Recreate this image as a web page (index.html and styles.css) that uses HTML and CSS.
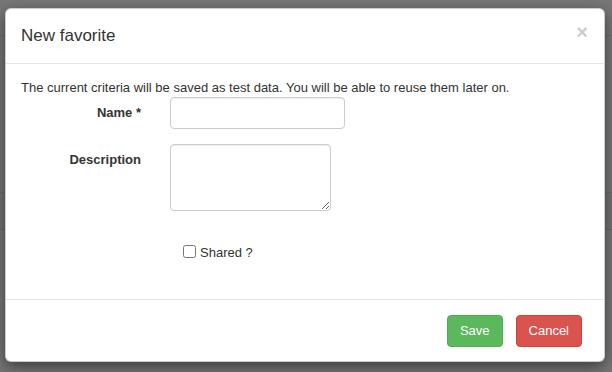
FILE: index.html
```html
<!DOCTYPE html>
<html lang="en">
<head>
    <meta charset="UTF-8">
    <meta name="viewport" content="width=device-width, initial-scale=1.0">
    <title>New favorite</title>
    <link rel="stylesheet" href="styles.css">
</head>
<body>
    <div class="modal-content">
        <div class="modal-header">
            <h4 class="modal-title">New favorite</h4>
            <button type="button" class="close">&times;</button>
        </div>

        <div class="modal-body">
            <p class="intro">The current criteria will be saved as test data. You will be able to reuse them later on.</p>

            <form class="form-horizontal">
                <div class="form-group">
                    <label class="control-label" for="favName">Name *</label>
                    <input type="text" id="favName" class="form-control">
                </div>
                <div class="form-group">
                    <label class="control-label" for="favDesc">Description</label>
                    <textarea id="favDesc" class="form-control desc"></textarea>
                </div>
                <div class="form-group checkbox-group">
                    <span></span>
                    <label class="checkbox">
                        <input type="checkbox"> Shared ?
                    </label>
                </div>
            </form>
        </div>

        <div class="modal-footer">
            <button type="button" class="btn btn-success">Save</button>
            <button type="button" class="btn btn-danger">Cancel</button>
        </div>
    </div>
</body>
</html>
```

FILE: styles.css
```css
* {
    box-sizing: border-box;
}

body {
    margin: 0;
    min-height: 372px;
    padding: 8px 7px 0 5px;
    font-family: "Liberation Sans", Arial, sans-serif;
    font-size: 13px;
    line-height: 20px;
    color: #333;
    background:
        linear-gradient(to bottom,
            transparent 35px, #6d6d6d 35px, #6d6d6d 36px, transparent 36px,
            transparent 192px, #6c6c6c 192px, #6c6c6c 193px, #737373 193px,
            #737373 229px, #696969 229px, #696969 230px, transparent 230px),
        #777;
}

.modal-content {
    width: 600px;
    height: 354px;
    background: #fff;
    border: 1px solid rgba(0, 0, 0, 0.2);
    border-radius: 6px;
    box-shadow: 0 5px 15px rgba(0, 0, 0, 0.5);
    display: flex;
    flex-direction: column;
}

.modal-header {
    display: flex;
    justify-content: space-between;
    align-items: flex-start;
    padding: 15px 16px 15px 15px;
    border-bottom: 1px solid #e5e5e5;
}

.modal-title {
    margin: 0;
    font-size: 17px;
    font-weight: 500;
    line-height: 24px;
}

.close {
    padding: 0;
    margin-top: -2px;
    border: 0;
    background: transparent;
    font-family: "Liberation Sans", Arial, sans-serif;
    font-size: 20px;
    font-weight: bold;
    line-height: 1;
    color: #000;
    opacity: 0.2;
    cursor: pointer;
}

.modal-body {
    flex: 1;
    padding: 13px 15px 0;
}

.intro {
    margin: 0 0 -1px;
    padding-top: 1px;
}

.form-group {
    display: grid;
    grid-template-columns: 120px 1fr;
    column-gap: 29px;
    align-items: start;
    margin-bottom: 15px;
}

.control-label {
    text-align: right;
    font-weight: bold;
    padding-top: 6px;
}

.form-control {
    width: 175px;
    height: 32px;
    padding: 6px 12px;
    font-family: inherit;
    font-size: 13px;
    color: #555;
    background: #fff;
    border: 1px solid #ccc;
    border-radius: 4px;
    box-shadow: inset 0 1px 1px rgba(0, 0, 0, 0.075);
}

.desc {
    width: 161px;
    height: 67px;
    resize: both;
}

.checkbox-group {
    padding-top: 17px;
}

.checkbox {
    display: flex;
    align-items: flex-start;
    font-weight: normal;
}

.checkbox input {
    width: 13px;
    height: 13px;
    margin: 2px 4px 0 13px;
}

.modal-footer {
    display: flex;
    justify-content: flex-end;
    gap: 13px;
    padding: 15px 22px 14px 15px;
    border-top: 1px solid #e5e5e5;
}

.btn {
    height: 32px;
    padding: 5px 12px;
    font-family: inherit;
    font-size: 13px;
    line-height: 20px;
    color: #fff;
    border: 1px solid transparent;
    border-radius: 4px;
    cursor: pointer;
}

.btn-success {
    background: #5cb85c;
    border-color: #4cae4c;
}

.btn-danger {
    background: #d9534f;
    border-color: #d43f3a;
}
```
